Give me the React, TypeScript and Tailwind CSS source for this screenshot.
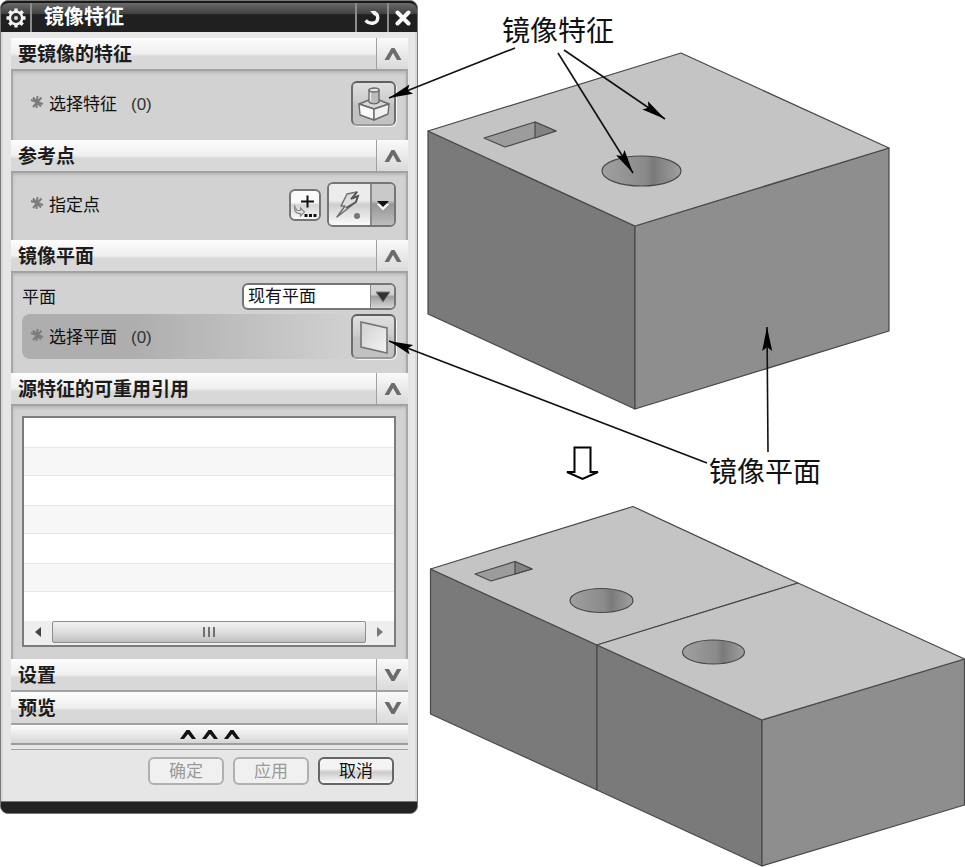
import React, { useState } from 'react';

interface SectionProps {
    title: string;
    defaultOpen?: boolean;
    className?: string;
    children?: React.ReactNode;
}

interface ArrowProps {
    from: [number, number];
    to: [number, number];
}

const Chevron: React.FC<{ open: boolean }> = ({ open }) => (
    <svg viewBox="0 0 18 14" className={open ? 'h-[14px] w-[18px]' : 'h-[14px] w-[18px] rotate-180'} aria-hidden="true">
        <path d="M0.5 13 L7.5 1 H10.5 L17.5 13 H13 L9 6 L5 13 Z" fill="#6c6c6c" />
    </svg>
);

const Section: React.FC<SectionProps> = ({ title, defaultOpen = false, className = '', children }) => {
    const [open, setOpen] = useState(defaultOpen);

    return (
        <section>
            <h2>
                <button
                    onClick={() => setOpen(!open)}
                    aria-expanded={open}
                    className="flex h-[33px] w-full items-stretch border-b-2 border-[#a2a2a2] bg-linear-to-b from-[#fdfdfd] from-0% via-[#efefef] via-50% to-[#d8d8d8] to-60% text-left"
                >
                    <span className="flex-1 pl-[7px] text-[19px] leading-[33px] font-bold text-[#1c1c1c]">{title}</span>
                    <span className="flex w-8 items-center justify-center border-l border-[#a0a0a0] bg-linear-to-b from-[#fafafa] to-[#dadada]">
                        <Chevron open={open} />
                    </span>
                </button>
            </h2>
            {open && children && (
                <div className={`border-x-2 border-[#a8a8a8] bg-[#d2d2d2] pr-[10px] pl-[9px] shadow-[inset_0_2px_3px_#b8b8b8] ${className}`}>
                    {children}
                </div>
            )}
        </section>
    );
};

const Required = () => (
    <svg viewBox="0 0 14 14" className="mb-[5px] h-[14px] w-[14px]" aria-hidden="true">
        <path d="M7.5 1 L6.5 13 M1 5 L13 9 M3 12 L11.5 2.5 M3 2.5 L11 11.5" fill="none" stroke="#7c7c7c" strokeWidth="2" />
    </svg>
);

const Prompt: React.FC<{ text: string; count?: boolean }> = ({ text, count }) => (
    <span className="flex flex-1 items-center pt-[2px] pl-2">
        <Required />
        <span className="pl-[5px]">{text}</span>
        {count && <span className="pl-[14px] text-[#333]">(0)</span>}
    </span>
);

const toolButton =
    'flex h-[45px] w-[45px] items-center justify-center rounded-md border-2 border-t-[#5e5e5e] border-x-[#6e6e6e] border-b-[#9a9a9a] bg-linear-to-b from-[#e0e0e0] from-0% via-[#cdcdcd] via-45% to-[#c2c2c2] to-55% shadow-[1px_1px_0_#f4f4f4]';

const footerButton = 'h-[28px] w-[76px] rounded-md border-2 text-[17px] leading-[26px]';

const Arrow: React.FC<ArrowProps> = ({ from, to }) => {
    const angle = (Math.atan2(to[1] - from[1], to[0] - from[0]) * 180) / Math.PI;
    return (
        <g>
            <line x1={from[0]} y1={from[1]} x2={to[0]} y2={to[1]} stroke="#111" strokeWidth="1.6" />
            <path d="M0 0 L-24 -5 L-20 0 L-24 5 Z" fill="#000" transform={`translate(${to[0]} ${to[1]}) rotate(${angle})`} />
        </g>
    );
};

const ModelDrawing = () => (
    <svg viewBox="418 0 547 867" className="pointer-events-none relative w-full overflow-visible" role="img" aria-label="镜像特征">
        <defs>
            <linearGradient id="hole">
                <stop offset="0" stopColor="#a0a0a0" />
                <stop offset="0.55" stopColor="#8a8a8a" />
                <stop offset="0.65" stopColor="#7a7a7a" />
                <stop offset="1" stopColor="#a0a0a0" />
            </linearGradient>
        </defs>

        {/* single block */}
        <g stroke="#484848" strokeWidth="1.2" strokeLinejoin="round">
            <path d="M428 131 L635 226 V409 L428 314 Z" fill="#7a7a7a" />
            <path d="M635 226 L889 148 V331 L635 409 Z" fill="#8e8e8e" />
            <path d="M428 131 L681 53 L889 148 L635 226 Z" fill="#c4c4c4" />
            <path d="M484 138 L535 122 L556 131 L505 147 Z" fill="#9c9c9c" />
            <path d="M535 122 L556 131 L535 138 Z" fill="#828282" />
            <ellipse cx="641.5" cy="171" rx="39.5" ry="15" fill="url(#hole)" />
        </g>

        {/* mirrored pair */}
        <g stroke="#484848" strokeWidth="1.2" strokeLinejoin="round">
            <path d="M430.5 569 L597 645 V790 L430.5 714 Z" fill="#7a7a7a" />
            <path d="M597 645 L762 720 V866 L597 790 Z" fill="#7a7a7a" />
            <path d="M762 720 L964.5 659 V805 L762 866 Z" fill="#8e8e8e" />
            <path d="M430.5 569 L633 506.5 L798 583 L597 645 Z" fill="#c4c4c4" />
            <path d="M597 645 L798 583 L964.5 659 L762 720 Z" fill="#c4c4c4" />
            <path d="M475 574 L515 561.5 L532 569 L491 581 Z" fill="#9c9c9c" />
            <path d="M515 561.5 L532 569 L515 574 Z" fill="#828282" />
            <ellipse cx="601.5" cy="600.5" rx="31.5" ry="12" fill="url(#hole)" />
            <ellipse cx="713.5" cy="652" rx="31" ry="12" fill="url(#hole)" />
        </g>

        <Arrow from={[515, 48]} to={[389, 98]} />
        <Arrow from={[558, 53]} to={[633, 173]} />
        <Arrow from={[564, 50]} to={[665, 119]} />
        <Arrow from={[707, 463]} to={[389, 341]} />
        <Arrow from={[768, 452]} to={[767, 327]} />

        <path d="M574.5 447.5 H590.5 V472 H598 L582.5 479 L567 472 H574.5 Z" fill="#fff" stroke="#000" strokeWidth="2" />

        <g fontSize="28" fill="#111">
            <text x="502" y="41">镜像特征</text>
            <text x="709" y="482">镜像平面</text>
        </g>
    </svg>
);

const MirrorDialog = () => (
    <div className="flex flex-col rounded-lg border border-[#777] bg-[#222] text-[17px] leading-6 text-[#111]">
        <header className="flex h-[31px] items-stretch overflow-hidden rounded-t-lg border-t-2 border-[#1a1a1a] bg-linear-to-b from-[#6a6a6a] from-0% via-[#414141] via-38% to-[#202020] to-40%">
            <button aria-label="选项" className="flex w-[31px] items-center justify-center border-r-2 border-[#8c8c8c]">
                <svg viewBox="0 0 20 20" className="h-5 w-5" aria-hidden="true">
                    <g stroke="#f2f2f2" strokeWidth="3.4">
                        <path d="M10 0.5 V19.5 M0.5 10 H19.5 M3.3 3.3 L16.7 16.7 M16.7 3.3 L3.3 16.7" />
                        <circle cx="10" cy="10" r="6.2" fill="#2c2c2c" strokeWidth="2.6" />
                    </g>
                    <circle cx="10" cy="10" r="2" fill="#e0e0e0" />
                </svg>
            </button>
            <h1 className="flex-1 pl-3 text-[20px] leading-[28px] font-bold text-white">镜像特征</h1>
            <button aria-label="重置" className="flex w-8 items-center justify-center border-l-2 border-[#8c8c8c]">
                <svg viewBox="0 0 18 18" className="h-[18px] w-[18px]" aria-hidden="true">
                    <path d="M10 3.5 C16.5 4.5 16 13 10.5 14 C7 14.8 4.5 13.5 2.5 11.5" fill="none" stroke="#f4f4f4" strokeWidth="3.4" />
                    <path d="M7 2 H13 L12 7 Z" fill="#f4f4f4" />
                </svg>
            </button>
            <button aria-label="关闭" className="flex w-[30px] items-center justify-center border-l-2 border-[#8c8c8c]">
                <svg viewBox="0 0 16 16" className="h-4 w-4" aria-hidden="true">
                    <path d="M2.5 2.5 L13.5 13.5 M13.5 2.5 L2.5 13.5" stroke="#fafafa" strokeWidth="4" strokeLinecap="round" />
                </svg>
            </button>
        </header>

        <div className="border-x-2 border-[#d8d8d8] bg-[#e6e6e6] pt-[6px] pr-[7px] pb-4 pl-2">
            <Section title="要镜像的特征" defaultOpen className="pt-[10px] pb-[14px]">
                <div className="flex items-center">
                    <Prompt text="选择特征" count />
                    <button aria-label="选择特征" className={toolButton}>
                        <svg viewBox="0 0 34 34" className="h-[34px] w-[34px]" aria-hidden="true">
                            <g stroke="#6a6a6a" strokeWidth="1.4" strokeLinejoin="round">
                                <path d="M2 17 L17 11 L32 17 L17 22 Z" fill="#d8d8d8" />
                                <path d="M2 17 L17 22 V33 L3 28 Z" fill="#fafafa" />
                                <path d="M32 17 L17 22 V33 L31 27 Z" fill="#f0f0f0" />
                                <path d="M12 3 V15 C14 17.5 20 17.5 22 15 V3 Z" fill="#bcbcbc" />
                                <path d="M13.5 5 V14.5" stroke="#e6e6e6" />
                                <ellipse cx="17" cy="3" rx="5" ry="2" fill="#e4e4e4" />
                            </g>
                        </svg>
                    </button>
                </div>
            </Section>

            <Section title="参考点" defaultOpen className="pt-[9px] pb-[13px]">
                <div className="flex items-center">
                    <Prompt text="指定点" />
                    <button
                        aria-label="点对话框"
                        className="mr-[6px] flex h-8 w-8 items-center justify-center rounded-md border-2 border-[#757575] bg-linear-to-b from-[#fafafa] from-40% via-[#d5d5d5] via-50% to-[#fafafa]"
                    >
                        <svg viewBox="0 0 26 26" className="h-[26px] w-[26px]" aria-hidden="true">
                            <path d="M9 9.5 H22 M15.5 3.5 V15.5" stroke="#111" strokeWidth="2" />
                            <path d="M2.5 14 L5 18.5 H8.5 V16 L12.5 20 L8.5 24 V21.5 C4.5 22 2 19.5 2.5 14 Z" fill="#e4e4e4" stroke="#8a8a8a" strokeWidth="1.2" />
                            <path d="M12.5 23.5 H24.5" stroke="#111" strokeWidth="3" strokeDasharray="3 1.5" />
                        </svg>
                    </button>
                    <span className="flex h-[45px] w-[69px] overflow-hidden rounded-md border-2 border-[#757575]">
                        <button aria-label="自动判断的点" className="flex flex-1 items-center justify-center bg-linear-to-b from-[#ececec] from-40% via-[#cfcfcf] via-50% to-[#fafafa]">
                            <svg viewBox="0 0 36 36" className="h-9 w-9" aria-hidden="true">
                                <path d="M15 7 L25 5 L21 11 L26 9 L24 15 L5 30 L13 19 L9 19 Z" fill="#dedede" stroke="#707070" strokeWidth="1.5" strokeLinejoin="round" />
                                <path d="M25 5 L19 12 L26 9 L24 15 L14 21" fill="none" stroke="#555" strokeWidth="1.8" />
                                <circle cx="25" cy="29" r="3" fill="#757575" />
                            </svg>
                        </button>
                        <button aria-label="更多点类型" className="flex w-6 items-center justify-center border-l-2 border-[#8a8a8a] bg-linear-to-b from-[#c9c9c9] from-40% via-[#989898] via-50% to-[#bdbdbd]">
                            <svg viewBox="0 0 14 12" className="h-3 w-[14px]" aria-hidden="true">
                                <path d="M1 5 L7 11 L13 5" fill="#f4f4f4" stroke="#f4f4f4" />
                                <path d="M1 2 H13 L7 8 Z" fill="#111" />
                            </svg>
                        </button>
                    </span>
                </div>
            </Section>

            <Section title="镜像平面" defaultOpen className="pt-[10px] pb-[14px]">
                <div className="flex items-center justify-between pb-1">
                    <label htmlFor="plane" className="pt-[2px]">平面</label>
                    <span className="relative w-[154px]">
                        <select
                            id="plane"
                            className="block h-[27px] w-full appearance-none rounded-md border-2 border-[#757575] bg-white pl-1 text-[17px] leading-[23px] text-[#111]"
                        >
                            <option>现有平面</option>
                            <option>新平面</option>
                        </select>
                        <span className="pointer-events-none absolute inset-y-[2px] right-[2px] flex w-6 items-center justify-center rounded-r-sm border-l border-[#8a8a8a] bg-linear-to-b from-[#d4d4d4] from-40% via-[#a0a0a0] via-50% to-[#d6d6d6]">
                            <svg viewBox="0 0 16 12" className="h-3 w-4" aria-hidden="true">
                                <path d="M1 1 H15 L8 11 Z" fill="#333" stroke="#777" />
                            </svg>
                        </span>
                    </span>
                </div>
                <div className="flex items-center rounded-lg bg-linear-to-r from-[#aeaeae] from-30% to-[#d2d2d2] to-90%">
                    <Prompt text="选择平面" count />
                    <button aria-label="选择平面" className={toolButton}>
                        <svg viewBox="0 0 34 36" className="h-9 w-[34px]" aria-hidden="true">
                            <defs>
                                <linearGradient id="sheet" x2="1" y2="1">
                                    <stop offset="0" stopColor="#d0d0d0" />
                                    <stop offset="1" stopColor="#f4f4f4" />
                                </linearGradient>
                            </defs>
                            <path d="M4 3 L30 9 V34 L4 28 Z" fill="url(#sheet)" stroke="#747474" strokeWidth="1.6" />
                        </svg>
                    </button>
                </div>
            </Section>

            <Section title="源特征的可重用引用" defaultOpen className="pt-[10px] pb-[12px]">
                <div className="border-2 border-[#7c7c7c] bg-white">
                    <ul aria-label="源特征的可重用引用">
                        {[0, 1, 2, 3, 4, 5, 6].map(row => (
                            <li key={row} className="h-[29px] odd:bg-white even:border-y even:border-[#e8e8e8] even:bg-[#f7f7f7]" />
                        ))}
                    </ul>
                    <div className="flex h-6 items-stretch bg-[#eeeeee] pb-[2px]">
                        <button aria-label="向左滚动" className="flex w-7 items-center justify-center">
                            <svg viewBox="0 0 6 10" className="h-[10px] w-[6px]" aria-hidden="true"><path d="M6 0 V10 L0 5 Z" fill="#444" /></svg>
                        </button>
                        <div className="flex flex-1 items-center justify-center gap-[3px] rounded-xs border border-[#8e8e8e] bg-linear-to-b from-[#f2f2f2] via-[#dedede] to-[#c0c0c0]">
                            <span className="h-[10px] w-[2px] bg-[#707070]" />
                            <span className="h-[10px] w-[2px] bg-[#707070]" />
                            <span className="h-[10px] w-[2px] bg-[#707070]" />
                        </div>
                        <button aria-label="向右滚动" className="flex w-7 items-center justify-center">
                            <svg viewBox="0 0 6 10" className="h-[10px] w-[6px]" aria-hidden="true"><path d="M0 0 V10 L6 5 Z" fill="#777" /></svg>
                        </button>
                    </div>
                </div>
            </Section>

            <Section title="设置" />
            <Section title="预览" />

            <button aria-label="收起" className="flex h-5 w-full items-center justify-center gap-[6px] border-b-2 border-[#9c9c9c] bg-linear-to-b from-[#fdfdfd] to-[#d6d6d6]">
                {[0, 1, 2].map(i => (
                    <svg key={i} viewBox="0 0 16 10" className="h-[10px] w-4" aria-hidden="true">
                        <path d="M0 10 L6.5 1 H9.5 L16 10 H12 L8 5 L4 10 Z" fill="#111" />
                    </svg>
                ))}
            </button>

            <footer className="mt-1 flex justify-end gap-[9px] border-t border-[#a0a0a0] pt-[7px] pr-[14px]">
                <button disabled className={`${footerButton} border-[#b0b0b0] bg-[#f0f0f0] text-[#9a9a9a]`}>确定</button>
                <button disabled className={`${footerButton} border-[#b0b0b0] bg-[#f0f0f0] text-[#9a9a9a]`}>应用</button>
                <button className={`${footerButton} border-[#666] bg-linear-to-b from-[#f4f4f4] from-40% via-[#cccccc] via-55% to-[#f8f8f8] text-[#111]`}>取消</button>
            </footer>
        </div>
        <div className="h-3 rounded-b-lg border-t border-[#777] bg-[#222]" />
    </div>
);

const App = () => (
    <main className="grid grid-cols-[418fr_547fr] items-start bg-white font-['Liberation_Sans','Noto_Sans_CJK_SC',sans-serif]">
        <MirrorDialog />
        <ModelDrawing />
    </main>
);

export default App;
